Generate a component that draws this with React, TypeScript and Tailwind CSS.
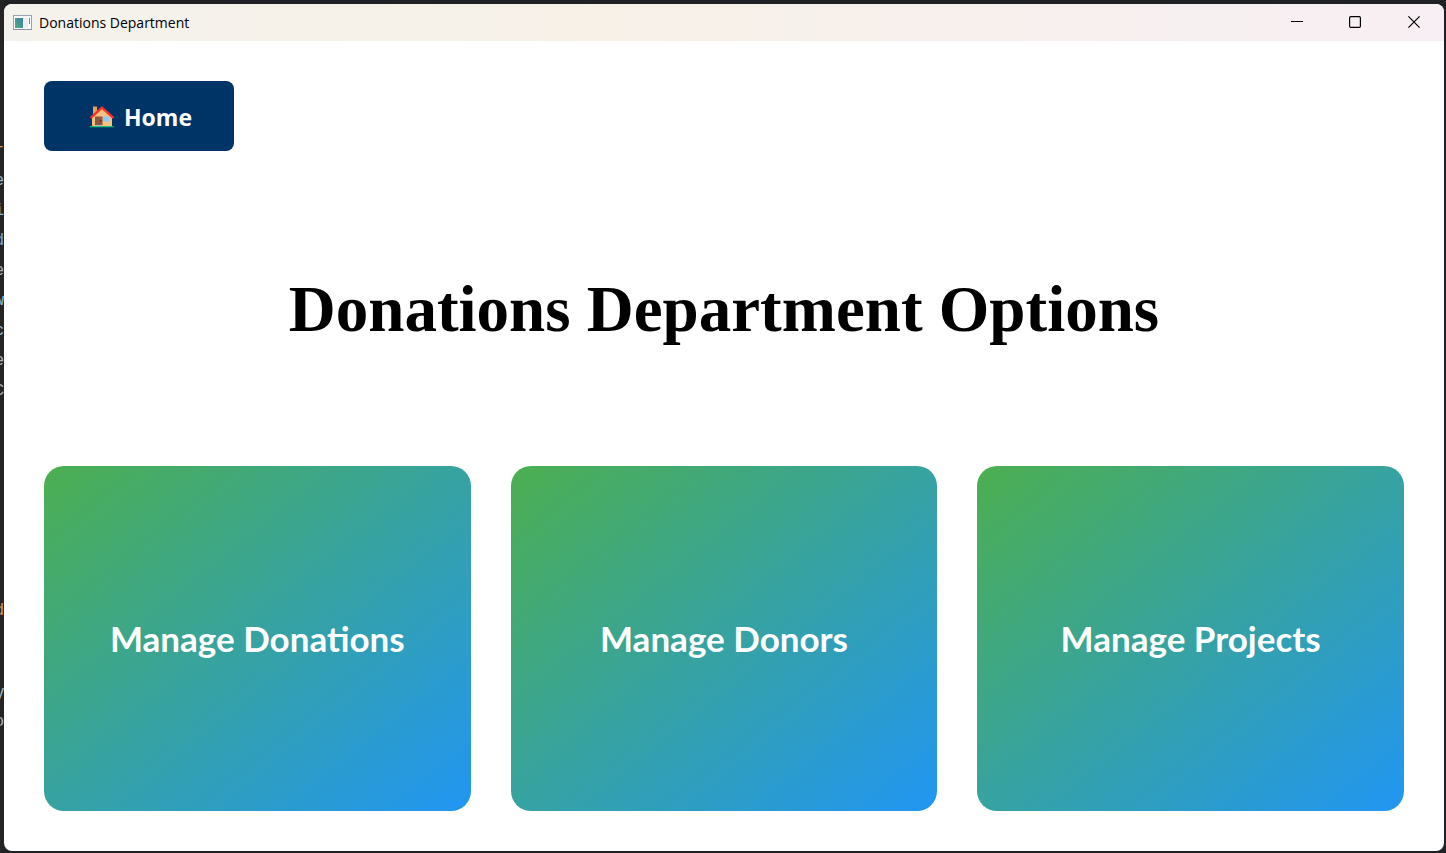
import React from "react";

const options = ["Manage Donations", "Manage Donors", "Manage Projects"];

const leftGlyphs = [
  { c: "r", cls: "top-[141px] text-[#c99a5a]" },
  { c: "e", cls: "top-[171px] text-[#8fb8d8]" },
  { c: "i", cls: "top-[201px] text-[#8fb8d8]" },
  { c: "d", cls: "top-[231px] text-[#6fa8dc]" },
  { c: "e", cls: "top-[261px] text-[#a8b4bd]" },
  { c: "w", cls: "top-[291px] text-[#8fb8d8]" },
  { c: "c", cls: "top-[321px] text-[#8fb8d8]" },
  { c: "e", cls: "top-[351px] text-[#a8b4bd]" },
  { c: "C", cls: "top-[381px] text-[#a8b4bd]" },
  { c: "d", cls: "top-[601px] text-[#c99a5a]" },
  { c: "V", cls: "top-[685px] text-[#a8b4bd]" },
  { c: "o", cls: "top-[712px] text-[#a8b4bd]" },
];

function AppIcon() {
  return (
    <svg width="19" height="16" viewBox="0 0 19 16" aria-hidden="true">
      <defs>
        <linearGradient id="pane" x1="0" y1="1" x2="1" y2="0">
          <stop offset="0" stopColor="#4fae82" />
          <stop offset="1" stopColor="#3a7fa8" />
        </linearGradient>
      </defs>
      <rect x="0.5" y="0.5" width="18" height="14" fill="#fbfcfd" stroke="#9aa3b5" />
      <rect x="2" y="3" width="8" height="10" fill="url(#pane)" />
      <rect x="11" y="3" width="4" height="10" fill="#eeeff2" />
      <rect x="16" y="3" width="1" height="6" fill="#4f9c9c" />
      <rect x="0" y="14" width="19" height="1" fill="#858fa5" />
    </svg>
  );
}

function House() {
  return (
    <svg width="24" height="22" viewBox="0 0 24 22" aria-hidden="true">
      <path d="M3 0.500h4v9H3z" fill="#dca55f" />
      <path d="M2 11 12 2l10 9v9.500H2z" fill="#f4c27f" />
      <path d="M1.300 11.300 12 1.600l10.700 9.700" fill="none" stroke="#f8312f" strokeWidth="2.400" strokeLinecap="round" strokeLinejoin="round" />
      <path d="M5 10.500h7.500V20H5z" fill="#8b5745" />
      <circle cx="10.800" cy="15" r=".8" fill="#4a2b22" />
      <rect x="13" y="10.500" width="6" height="5" rx=".5" fill="#8fc8f5" />
      <path d="M5 19.300h7.500v1H5z" fill="#d9d9d9" />
      <path d="M0 20.300h24v1H0z" fill="#00d26a" />
    </svg>
  );
}

export default function App() {
  return (
    <div className="relative flex h-screen min-h-[600px] flex-col overflow-hidden bg-[#202124] pt-1 pr-0.5 pb-0.5 pl-1">
      <div aria-hidden="true" className="absolute inset-y-0 left-0 w-1 overflow-hidden bg-[#242424] font-['Liberation_Mono',monospace] text-base leading-5">
        {leftGlyphs.map((g, i) => (
          <span key={i} className={`absolute right-0 ${g.cls}`}>{g.c}</span>
        ))}
      </div>
      <div className="relative flex flex-1 flex-col overflow-hidden rounded-lg bg-white">
        <header className="flex h-[37px] shrink-0 items-center bg-linear-to-r from-[#f4f2ec] via-[#f7f1e8] via-40% to-[#f7eff3] pl-[9px]">
          <AppIcon />
          <span className="ml-[7px] flex-1 font-['Open_Sans',sans-serif] text-sm text-black">Donations Department</span>
          <button aria-label="Minimize" className="flex h-9 w-[58px] items-center justify-center self-start">
            <svg width="12" height="12" viewBox="0 0 12 12"><path d="M0 5.500h12" stroke="#000" /></svg>
          </button>
          <button aria-label="Maximize" className="flex h-9 w-[58px] items-center justify-center self-start">
            <svg width="12" height="12" viewBox="0 0 12 12"><rect x=".6" y=".6" width="10.800" height="10.800" rx="1.200" fill="none" stroke="#000" strokeWidth="1.200" /></svg>
          </button>
          <button aria-label="Close" className="flex h-9 w-[60px] items-center justify-center self-start">
            <svg width="12" height="12" viewBox="0 0 12 12"><path d="m.4.4 11.200 11.200M11.600.4.400 11.600" stroke="#000" strokeWidth="1.200" /></svg>
          </button>
        </header>
        <main className="flex flex-1 flex-col p-10">
          <button className="flex h-[70px] w-[190px] items-center justify-center gap-2.5 self-start rounded-lg bg-[#003366] pt-0.5 pl-1 font-['Open_Sans',sans-serif] text-[23px] font-bold text-white">
            <House />
            <span>Home</span>
          </button>
          <div className="flex flex-1 items-center justify-center pt-0.5">
            <h1 className="text-center font-['Liberation_Serif',serif] text-[65px] leading-none font-bold text-black">Donations Department Options</h1>
          </div>
          <div className="grid h-[345px] grid-cols-3 gap-10">
            {options.map((label) => (
              <button key={label} className="rounded-[20px] bg-[linear-gradient(to_bottom_right,#4caf50,#2196f3)] font-['Lato',sans-serif] text-[35px] font-bold text-white">
                {label}
              </button>
            ))}
          </div>
        </main>
      </div>
    </div>
  );
}
